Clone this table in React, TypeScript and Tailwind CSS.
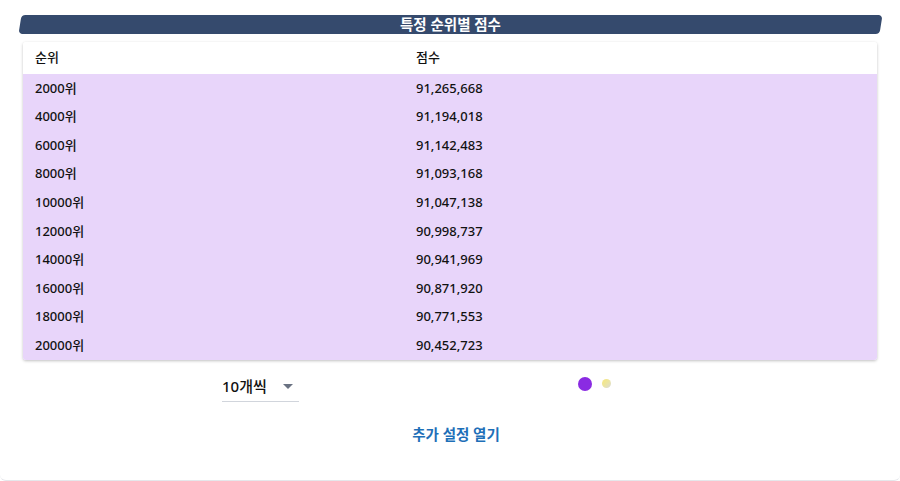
const rows = [
  { rank: "2000위", score: "91,265,668" },
  { rank: "4000위", score: "91,194,018" },
  { rank: "6000위", score: "91,142,483" },
  { rank: "8000위", score: "91,093,168" },
  { rank: "10000위", score: "91,047,138" },
  { rank: "12000위", score: "90,998,737" },
  { rank: "14000위", score: "90,941,969" },
  { rank: "16000위", score: "90,871,920" },
  { rank: "18000위", score: "90,771,553" },
  { rank: "20000위", score: "90,452,723" },
];

export default function App() {
  return (
    <div
      className="w-[900px] h-[481px] bg-white text-[#111] overflow-hidden"
      style={{ fontFamily: '"Noto Sans", "Noto Sans CJK KR", sans-serif' }}
    >
      <div className="h-[481px] border-b border-gray-200 rounded-b-md flex flex-col">
        {/* Title bar */}
        <div className="relative mt-[15px] ml-[20px] mr-[19px] h-[19px] flex items-center justify-center">
          <div className="absolute inset-0 bg-[#354a6d] rounded-[4px] -skew-x-[9deg]" />
          <span className="relative text-white font-bold text-[14.5px] leading-none">특정 순위별 점수</span>
        </div>

        {/* Table */}
        <div className="mt-[8px] mx-[23px] rounded-[3px] shadow-[0_1px_3px_rgba(0,0,0,0.25)] overflow-hidden">
          <table className="w-full text-[13px] border-collapse">
            <thead>
              <tr className="h-[32px] bg-white">
                <th className="w-[393px] pl-[12px] text-left font-medium">순위</th>
                <th className="text-left font-medium">점수</th>
              </tr>
            </thead>
            <tbody>
              {rows.map((r) => (
                <tr key={r.rank} className="h-[28.6px] bg-[#e8d5fa] font-medium">
                  <td className="pl-[12px]">{r.rank}</td>
                  <td>{r.score}</td>
                </tr>
              ))}
            </tbody>
          </table>
        </div>

        {/* Controls */}
        <div className="flex mt-[12px] h-[30px]">
          <div className="w-[450px] pl-[222px]">
            <div className="w-[77px] h-[30px] border-b border-gray-300 flex items-center justify-between">
              <span className="text-[15px] font-medium">10개씩</span>
              <span className="mr-[6px] w-0 h-0 border-x-[5px] border-x-transparent border-t-[5px] border-t-gray-500" />
            </div>
          </div>
          <div className="flex items-start gap-[10px] pl-[128px] pt-[5px]">
            <span className="size-[14px] rounded-full bg-[#8a2be2]" />
            <span className="mt-[2px] size-[9px] rounded-full bg-gradient-to-br from-[#f7e77a] via-[#ece5a0] to-[#d9d9d9]" />
          </div>
        </div>

        <div className="mt-[22px] flex justify-center">
          <button className="ml-[12px] text-[14.5px] font-bold text-[#1e6fb8]">추가 설정 열기</button>
        </div>
      </div>
    </div>
  );
}
